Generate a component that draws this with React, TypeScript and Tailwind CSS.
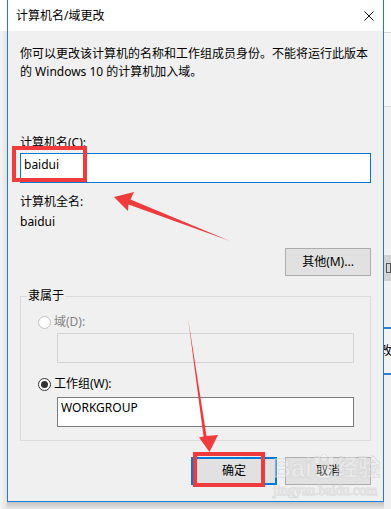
import React from "react";

function Radio({ checked, disabled }: { checked?: boolean; disabled?: boolean }) {
  return (
    <span
      className={
        disabled
          ? "flex h-[13px] w-[13px] shrink-0 items-center justify-center rounded-full border border-[#c4c4c4] bg-[#fcfcfc]"
          : "flex h-[13px] w-[13px] shrink-0 items-center justify-center rounded-full border border-[#333333] bg-white"
      }
    >
      {checked && <span className="h-[7px] w-[7px] rounded-full bg-[#333333]" />}
    </span>
  );
}

export default function App() {
  return (
    <div className="relative flex h-[509px] w-[391px] overflow-hidden bg-[#ececec] font-['Noto_Sans','Noto_Sans_CJK_SC',sans-serif] text-[12px] leading-[18px] text-black">
      {/* left desktop strip */}
      <div className="flex w-[7px] flex-col">
        <div className="h-[31px] bg-white" />
        <div className="flex-1 bg-gradient-to-r from-[#f5f5f5] to-[#e2e2e2]" />
      </div>

      {/* dialog */}
      <div className="flex w-[377px] flex-col">
        <div className="flex h-[502px] flex-col border-x border-b border-[#1a7fd4] bg-[#f0f0f0]">
          <div className="flex h-[31px] shrink-0 items-center justify-between bg-white pl-[8px] pr-[9px]">
            <span>计算机名/域更改</span>
            <svg width="10" height="10" viewBox="0 0 10 10">
              <path d="M0.5 0.5L9.5 9.5M9.5 0.5L0.5 9.5" stroke="#111" strokeWidth="1" />
            </svg>
          </div>

          <div className="flex flex-1 flex-col px-3 pt-[14px]">
            <p>
              你可以更改该计算机的名称和工作组成员身份。不能将运行此版本
              <br />的 Windows 10 的计算机加入域。
            </p>
            <div className="mt-[53px]">计算机名(C):</div>
            <div className="mt-[1px] h-[30px] border border-[#0078d7] bg-white pl-[3px] pt-[2px]">baidui</div>
            <div className="mt-[10px]">计算机全名:</div>
            <div className="mt-[2px]">baidui</div>
            <button className="mt-[17px] h-[28px] w-[86px] self-end border border-[#adadad] bg-[#e1e1e1]">
              其他(M)...
            </button>

            <fieldset className="mt-[11px] border border-[#dcdcdc] pb-[13px]">
              <legend className="ml-[6px] px-[1px]">隶属于</legend>
              <div className="mt-[8px] flex items-center gap-[3px] pl-[17px] text-[#838383]">
                <Radio disabled />
                <span>域(D):</span>
              </div>
              <div className="ml-[36px] mt-[2px] h-[30px] w-[297px] border border-[#d5d5d5] bg-[#f0f0f0]" />
              <div className="mt-[12px] flex items-center gap-[3px] pl-[17px]">
                <Radio checked />
                <span>工作组(W):</span>
              </div>
              <div className="ml-[36px] mt-[4px] h-[30px] w-[297px] border border-[#7a7a7a] bg-white pl-[3px] pt-[1px]">
                WORKGROUP
              </div>
            </fieldset>

            <div className="mt-[16px] flex justify-end gap-2">
              <button className="h-[28px] w-[86px] border-2 border-[#0078d7] bg-[#e1e1e1]">确定</button>
              <button className="h-[28px] w-[86px] border border-[#adadad] bg-[#e1e1e1]">取消</button>
            </div>
          </div>
        </div>
        <div className="flex-1 bg-gradient-to-b from-[#c2c2c2] to-[#e6e6e6]" />
      </div>

      {/* right desktop strip (background window) */}
      <div className="flex flex-1 flex-col overflow-hidden bg-[#f0f0f0]">
        <div className="h-[33px] shrink-0 border-b border-[#d9d9d9] bg-white" />
        <div className="h-[74px] shrink-0 border-b border-[#d9d9d9] bg-[#f7f7f7]" />
        <div className="h-[148px] shrink-0" />
        <div className="flex h-[26px] shrink-0 items-center bg-[#d4d4d4] pl-[2px]">
          <span className="h-[10px] w-[8px] border border-[#555]" />
        </div>
        <div className="h-[46px] shrink-0" />
        <div className="flex h-[48px] shrink-0 items-center overflow-hidden border-y-2 border-[#2f7fd0] bg-[#f3f3f3] text-[12px]">
          <span className="-ml-[4px] whitespace-nowrap">改(</span>
        </div>
        <div className="flex-1" />
      </div>

      {/* annotations overlay */}
      <div className="pointer-events-none absolute left-[12px] top-[146px] h-[36px] w-[75px] border-4 border-[#ef3b3b]" />
      <div className="pointer-events-none absolute left-[193px] top-[452px] h-[35px] w-[72px] border-4 border-[#ef3b3b]" />

      <svg className="pointer-events-none absolute left-0 top-0" width="391" height="509" viewBox="0 0 391 509">
        <polygon points="114,197 134,192 130.5,199.5 230,241 128.5,204.5 128,211" fill="#ef3b3b" />
        <polygon points="188,318 206.5,436 218,435 209.5,452 199,437.5 203.5,436.5" fill="#ef3b3b" />
      </svg>

      {/* watermark */}
      <div className="pointer-events-none absolute left-[273px] top-[453px] flex flex-col items-start text-[rgba(255,255,255,0.35)] opacity-80 [paint-order:stroke_fill] [-webkit-text-stroke:1px_#d4d4d4]">
        <div className="flex items-end font-['Liberation_Sans','Noto_Sans_CJK_SC',sans-serif] font-bold leading-[30px]">
          <span className="text-[25px]">Bai</span>
          <svg width="24" height="26" viewBox="0 0 24 26" className="mb-[3px]">
            <g fill="rgba(255,255,255,0.35)" stroke="#d4d4d4" strokeWidth="1">
              <ellipse cx="5" cy="6" rx="3" ry="4" />
              <ellipse cx="12" cy="4" rx="3" ry="4" />
              <ellipse cx="19" cy="7" rx="3" ry="4" />
              <path d="M4 22 C3 16 8 11 12 11 C16 11 21 16 20 22 C19 25 5 25 4 22 Z" />
            </g>
          </svg>
          <span className="text-[22px]">经验</span>
        </div>
        <div className="font-['Liberation_Serif',serif] text-[14px] leading-[16px]">jingyan.baidu.com</div>
      </div>
    </div>
  );
}
